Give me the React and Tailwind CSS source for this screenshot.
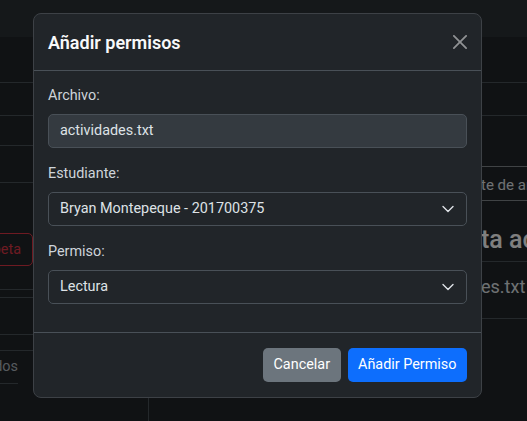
import React from 'react';

function CloseIcon() {
  return (
    <svg className="h-[14px] w-[14px]" viewBox="0 0 16 16" fill="#ffffff">
      <path d="M.293.293a1 1 0 0 1 1.414 0L8 6.586 14.293.293a1 1 0 1 1 1.414 1.414L9.414 8l6.293 6.293a1 1 0 0 1-1.414 1.414L8 9.414l-6.293 6.293a1 1 0 0 1-1.414-1.414L6.586 8 .293 1.707a1 1 0 0 1 0-1.414z" />
    </svg>
  );
}

function Chevron() {
  return (
    <svg className="h-[8px] w-[12px]" viewBox="0 0 12 8" fill="none" stroke="#dee2e6" strokeLinecap="round" strokeLinejoin="round" strokeWidth={1.4}>
      <path d="M1 1.5 6 6.5 11 1.5" />
    </svg>
  );
}

function Field({ label, children }) {
  return (
    <div>
      <label className="mb-[7px] block text-[14.4px] leading-[22px] text-[#ced4da]">{label}</label>
      {children}
    </div>
  );
}

function Select({ value }) {
  return (
    <div className="flex h-[34px] items-center justify-between rounded-[5px] border border-[#495057] bg-[#212529] pl-[11px] pr-[12px] text-[14.4px] text-[#dee2e6]">
      <span>{value}</span>
      <Chevron />
    </div>
  );
}

// text split so that the part not covered by the modal starts at a fixed column
function Behind({ head, tail, className }) {
  return (
    <div className={`flex whitespace-nowrap ${className}`}>
      <span className="w-[316px] shrink-0 overflow-hidden text-right">{head}</span>
      <span>{tail}</span>
    </div>
  );
}

function Modal() {
  return (
    <div className="w-[449px] overflow-hidden rounded-[8px] border border-[#3d4146] bg-[#212529]">
      {/* Header */}
      <div className="flex h-[57px] items-center justify-between border-b border-[#495057] px-[14px]">
        <h5 className="text-[18px] font-semibold text-[#f8f9fa]">Añadir permisos</h5>
        <button className="opacity-50" aria-label="Close">
          <CloseIcon />
        </button>
      </div>

      {/* Body */}
      <div className="flex flex-col gap-[15px] px-[14px] pt-[14px] pb-[28px]">
        <Field label="Archivo:">
          <div className="flex h-[34px] items-center rounded-[5px] border border-[#495057] bg-[#343a40] px-[11px] text-[14.4px] text-[#dee2e6]">
            actividades.txt
          </div>
        </Field>
        <Field label="Estudiante:">
          <Select value="Bryan Montepeque - 201700375" />
        </Field>
        <Field label="Permiso:">
          <Select value="Lectura" />
        </Field>
      </div>

      {/* Footer */}
      <div className="flex justify-end gap-[7px] border-t border-[#495057] px-[14px] pt-[15px] pb-[15px]">
        <button className="h-[34px] rounded-[5px] bg-[#6c757d] px-[10.5px] text-[14.4px] text-white">Cancelar</button>
        <button className="h-[34px] rounded-[5px] bg-[#0d6efd] px-[10.5px] text-[14.4px] text-white">Añadir Permiso</button>
      </div>
    </div>
  );
}

function Background() {
  return (
    <div className="flex h-full flex-col">
      <div className="h-[37px] bg-[#2b3035]" />
      <div className="h-[46px] border-b border-[#495057]" />
      <div className="h-[33px] border-b border-[#495057]" />
      <div className="flex flex-1">
        {/* Sidebar */}
        <aside className="w-[149px] border-r border-[#495057]">
          <div className="h-[30px] border-b border-[#495057]" />
          <div className="h-[37px] border-b border-[#495057]" />
          <div className="mt-[50px] flex w-[33px] justify-end">
            <button className="h-[33px] shrink-0 whitespace-nowrap rounded-[5px] border border-[#dc3545] px-[11px] text-[14.4px] text-[#dc3545]">
              Eliminar Carpeta
            </button>
          </div>
          <div className="h-[24px] border-b border-[#495057]" />
          <div className="h-[8px] border-b border-[#495057]" />
          <div className="h-[37px] border-b border-[#495057]" />
          <div className="h-[16px] border-b border-[#495057]" />
          <div className="flex h-[33px] w-[18px] items-center justify-end border-b border-[#495057]">
            <span className="shrink-0 whitespace-nowrap text-[14.4px] text-[#adb5bd]">Archivos compartidos</span>
          </div>
        </aside>

        {/* Main */}
        <main className="flex-1 overflow-hidden pl-[16px]">
          <div className="mt-[50px] flex h-[35px] items-center border-y border-[#80868b] pt-[3px]">
            <Behind className="text-[15px] text-[#dee2e6]" head="Seleccione el repor" tail="te de archivos" />
          </div>
          <div className="h-[61px] border-b border-[#495057] pt-[24px]">
            <Behind className="text-[25px] font-medium leading-[30px] text-white" head="Contenido de carpe" tail="ta actual" />
          </div>
          <div className="h-[57px] border-b border-[#495057] pt-[13px]">
            <Behind className="text-[18px] leading-[24px] text-[#dee2e6]" head="Archivo: actividad" tail="es.txt" />
          </div>
        </main>
      </div>
    </div>
  );
}

export default function App() {
  return (
    <div className="relative h-[421px] w-[527px] overflow-hidden bg-[#212529] font-['Roboto',sans-serif] text-[#dee2e6]">
      <Background />
      <div className="absolute inset-0 bg-black/50" />
      <div className="absolute inset-0 pl-[33px] pt-[13px]">
        <Modal />
      </div>
    </div>
  );
}
